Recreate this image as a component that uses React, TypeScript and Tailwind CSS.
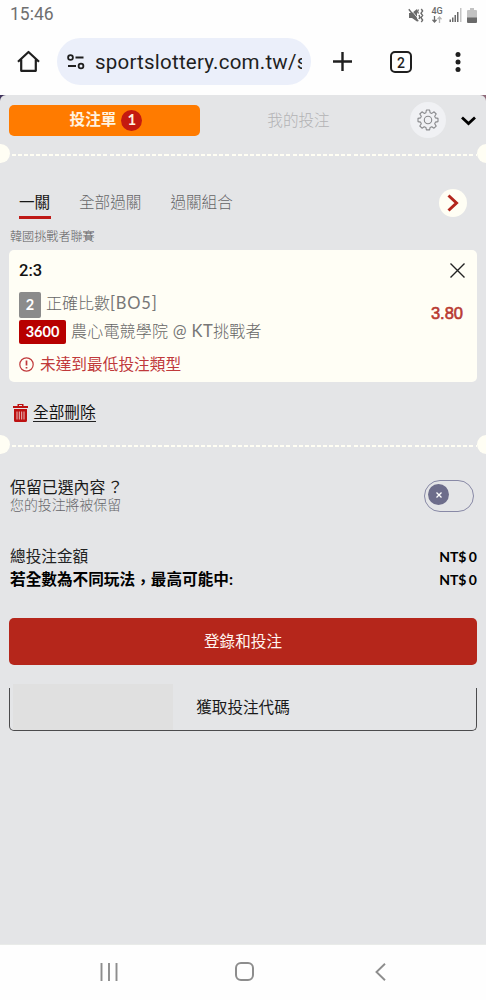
import type { ReactNode } from "react";

const cjk = "font-['Lato','Noto_Sans_CJK_TC',sans-serif]";

function StatusBar() {
  return (
    <div className="flex h-[30px] shrink-0 items-center justify-between pl-[10px] pr-[9px]">
      <span className="font-['Roboto',sans-serif] text-[17.500px] leading-none text-[#6f6f6f]">15:46</span>
      <div className="flex items-center text-[#6a6a6a]">
        {/* muted + vibrate */}
        <svg className="mr-[7px]" width="16" height="15" viewBox="0 0 16 15" fill="none" stroke="currentColor">
          <path d="M1 5h3l5-4v12.500l-5-3.500H1z" fill="currentColor" stroke="none" />
          <path d="M2 .5l8 10" stroke="#fff" strokeWidth=".8" />
          <path d="M.8 1.200l9.400 12" strokeWidth="1.400" />
          <path d="M10.500 1.500l-1 2 1 2M13.300 1l1.300 2-1.600 2.200 1.600 2.300-1.600 2.200 1.600 2.300-1.300 2M11 7l.8 2-.8 2" strokeWidth="1.400" />
        </svg>
        <div className="mr-[6px] flex w-[12px] flex-col items-center">
          <span className="font-['Roboto',sans-serif] text-[9px] font-medium leading-[9px]">4G</span>
          <svg width="10" height="7" viewBox="0 0 10 7" fill="none" stroke="currentColor" strokeWidth="1.300">
            <path d="M2.500 0v6M.5 3.800l2 2.200 2-2.200" />
            <path d="M7.500 7V1M5.500 3.200l2-2.200 2 2.200" stroke="#b5b5b5" />
          </svg>
        </div>
        <svg className="mr-[5px]" width="13" height="14" viewBox="0 0 13 14" fill="currentColor">
          <path d="M.5 11.500H2V14H.5zM3 9.500h1.500V14H3zM5.500 7H7v7H5.500zM8 4h1.500v10H8z" />
          <path d="M11 0h1.500v14H11z" fill="#c4c4c4" />
        </svg>
        <svg width="10" height="15" viewBox="0 0 10 15">
          <path d="M3 0h4v2h2a1 1 0 011 1v7H0V3a1 1 0 011-1h2z" fill="#c2c2c2" />
          <path d="M0 9.500h10V14a1 1 0 01-1 1H1a1 1 0 01-1-1z" fill="#6a6a6a" />
        </svg>
      </div>
    </div>
  );
}

function BrowserBar() {
  return (
    <div className="flex h-[65px] shrink-0 items-center pb-[2px] pl-[17px] text-[#1f1f1f]">
      <svg width="23" height="23" viewBox="0 0 23 23" fill="none" stroke="currentColor" strokeWidth="2.200">
        <path d="M1 11.800L11.500 2 22 11.800M4.200 9.500v11.300h14.600V9.500" strokeLinejoin="round" />
      </svg>
      <div className="ml-[17px] flex h-[47px] w-[254px] items-center rounded-full bg-[#ebeffa] pl-[10px] pr-[9px]">
        <svg className="shrink-0" width="18" height="16" viewBox="0 0 18 16" fill="none" stroke="currentColor" strokeWidth="1.800">
          <circle cx="3.500" cy="3.500" r="2.400" />
          <path d="M8.500 3.500h8M1 12h8" />
          <circle cx="14" cy="12" r="2.400" />
        </svg>
        <span className="ml-[10px] overflow-hidden whitespace-nowrap font-['Roboto',sans-serif] text-[20.500px] leading-7 tracking-[0.220px]">
          sportslottery.com.tw/s
        </span>
      </div>
      <svg className="ml-[22px]" width="19" height="19" viewBox="0 0 19 19" stroke="currentColor" strokeWidth="2.400">
        <path d="M9.500 0v19M0 9.500h19" />
      </svg>
      <div className="ml-[38px] flex h-[22px] w-[22px] items-center justify-center rounded-[5px] border-2 border-current pt-[2px] font-['Roboto',sans-serif] text-[14px] font-medium leading-none">
        2
      </div>
      <svg className="ml-[43px]" width="6" height="20" viewBox="0 0 6 20" fill="currentColor">
        <circle cx="3" cy="2.500" r="2.500" />
        <circle cx="3" cy="10" r="2.500" />
        <circle cx="3" cy="17.500" r="2.500" />
      </svg>
    </div>
  );
}

function TicketDivider() {
  return (
    <div className="flex h-[19px] shrink-0 items-center overflow-hidden">
      <div className="-ml-[9px] h-[19px] w-[19px] shrink-0 rounded-full bg-[#fffef4]" />
      <div className="ml-[2px] mt-[2px] h-[2px] flex-1 bg-[repeating-linear-gradient(90deg,#fffef4_0_4px,transparent_4px_6.100px)]" />
      <div className="-mr-[10px] h-[19px] w-[19px] shrink-0 rounded-full bg-[#fffef4]" />
    </div>
  );
}

function Tabs() {
  return (
    <div className="flex h-[38px] shrink-0 items-center pl-[9px] pr-[10px]">
      <div className="flex h-[31px] w-[191px] items-center justify-center rounded-[5px] bg-[#ff7b00] pl-[3px] text-[15.600px] font-bold text-[#fff3e0]">
        投注單
        <span className="ml-[5px] flex h-[21px] w-[21px] items-center justify-center rounded-full bg-[#c41a10] pb-px text-[15px]">
          1
        </span>
      </div>
      <div className="flex-1 pr-[13px] pt-px text-center text-[15.600px] font-light text-[#b3b3b5]">我的投注</div>
      <div className="flex h-[36px] w-[36px] items-center justify-center rounded-full bg-[#f0f1f4]">
        <svg width="22" height="22" viewBox="0 0 22 22" fill="none" stroke="#88898c" strokeWidth="1.100" strokeLinejoin="round">
          <path d="M9.400 1h3.200l.5 2.700 1.700.7L17.100 2.800l2.100 2.200-1.500 2.200.7 1.700 2.600.5v3.200l-2.600.5-.7 1.700 1.500 2.300-2.200 2.100-2.200-1.500-1.700.7-.5 2.500H9.400l-.5-2.500-1.700-.7L5 19.200 2.800 17l1.500-2.200-.7-1.700-2.600-.5V9.400l2.600-.5.7-1.700L2.800 5 5 2.800l2.200 1.600 1.700-.7z" />
          <circle cx="11" cy="11" r="3.700" />
        </svg>
      </div>
      <svg className="ml-[15px] mt-[2px]" width="15" height="10" viewBox="0 0 15 10" fill="none" stroke="#000" strokeWidth="2.800">
        <path d="M1 1.500l6.500 6 6.500-6" />
      </svg>
    </div>
  );
}

function BetTypes() {
  return (
    <div className="mt-[26px] flex h-[39px] items-start pl-[19px] pr-[19px] text-[15.600px] leading-[26px] text-[#666668]">
      <span className="h-[30px] w-[32px] border-b-[3px] border-[#bf1a17] text-[#161616]">一關</span>
      <span className="ml-[28px] font-light">全部過關</span>
      <span className="ml-[29px] font-light">過關組合</span>
      <span className="ml-auto flex h-7 w-7 items-center justify-center rounded-full bg-[#fffef4]">
        <svg width="12" height="18" viewBox="0 0 12 18" fill="none" stroke="#b3261c" strokeWidth="3">
          <path d="M1.500 1.500L9.500 9l-8 7.500" />
        </svg>
      </span>
    </div>
  );
}

function BetCard() {
  return (
    <div className="mx-[9px] h-[132px] rounded-[5px] bg-[#fffef5] pl-[10px] pr-[11px] pt-[8px]">
      <div className="flex h-6 items-center justify-between">
        <span className="pt-[2px] font-['Roboto',sans-serif] text-[16.500px] font-medium text-[#111]">2:3</span>
        <svg width="17" height="17" viewBox="0 0 17 17" stroke="#222" strokeWidth="1.400">
          <path d="M1.500 1.500l14 14M15.500 1.500l-14 14" />
        </svg>
      </div>
      <div className="mt-[10px] flex items-center justify-between">
        <div className="text-[16px] font-light text-[#666]">
          <div className="flex h-[26px] items-center">
            <span className="mr-[5px] flex h-[26px] w-[22px] items-center justify-center rounded-[2px] bg-[#8b8b8b] text-[14.500px] font-bold text-white">
              2
            </span>
            <span className="pb-[3px]">
              正確比數<span className="text-[16.500px] font-normal tracking-[0.800px] text-[#777]">[BO5]</span>
            </span>
          </div>
          <div className="mt-[2px] flex h-6 items-center">
            <span className="mr-[5px] flex h-6 w-[47px] items-center justify-center rounded-[2px] bg-[#b70000] text-[14.500px] font-bold text-white">
              3600
            </span>
            <span className="pb-[2px] tracking-[0.200px]">
              農心電競學院 <span className="text-[16.500px] font-normal tracking-[0.400px] text-[#777]">@ KT</span>挑戰者
            </span>
          </div>
        </div>
        <span className="mr-[3px] mt-[-9px] font-['Liberation_Sans',sans-serif] text-[16.500px] text-[#b83a31] [-webkit-text-stroke:0.600px_#b83a31]">
          3.80
        </span>
      </div>
      <div className="mt-[8px] flex h-6 items-center text-[15.700px] text-[#c0393b]">
        <svg className="mr-[6px]" width="15" height="15" viewBox="0 0 15 15" fill="none" stroke="currentColor" strokeWidth="1.200">
          <circle cx="7.500" cy="7.500" r="6.700" />
          <path d="M7.500 3.500v5M7.500 10v1.600" strokeWidth="1.700" />
        </svg>
        <span className="pt-px">未達到最低投注類型</span>
      </div>
    </div>
  );
}

function AmountRow({ label, bold = false }: { label: ReactNode; bold?: boolean }) {
  return (
    <div className="flex h-[23px] items-center justify-between text-[15.650px] text-black">
      <span className={bold ? "pl-px font-bold" : "pl-px font-normal text-[#222]"}>{label}</span>
      <span className="text-[14px] font-bold [word-spacing:-1px]">NT$ 0</span>
    </div>
  );
}

function SystemNav() {
  return (
    <div className="flex h-[55px] shrink-0 items-center bg-[#fefefe] pb-[2px] pl-[100px] text-[#8d8d8d]">
      <svg width="18" height="18" viewBox="0 0 18 18" stroke="currentColor" strokeWidth="1.900">
        <path d="M1.500 0v18M9 0v18M16.500 0v18" />
      </svg>
      <div className="ml-[117px] h-[19px] w-[19px] rounded-[6px] border-2 border-current" />
      <svg className="ml-[121px]" width="11" height="18" viewBox="0 0 11 18" fill="none" stroke="currentColor" strokeWidth="1.900">
        <path d="M10 .8L1.500 9l8.500 8.200" />
      </svg>
    </div>
  );
}

export default function App() {
  return (
    <div lang="zh-Hant" className={`flex h-[1000px] w-[486px] flex-col overflow-hidden bg-[#fefefe] ${cjk}`}>
      <StatusBar />
      <BrowserBar />
      <div className="min-h-0 flex-1 bg-[linear-gradient(90deg,#40335c_50%,#8d6878_50%)]">
        <main className="flex h-full flex-col rounded-t-[6px] border-b border-[#e9ebe9] bg-[#e4e5e7] pt-[6px]">
          <Tabs />
          <div className="mt-[5px]">
            <TicketDivider />
          </div>
          <BetTypes />
          <div className="h-[22px] pl-[10px] text-[12.100px] font-light leading-[18px] text-[#5c5c5e]">韓國挑戰者聯賽</div>
          <BetCard />

          <div className="mt-[18px] flex h-[26px] items-center pl-[13px] text-[15.650px] text-[#111]">
            <svg className="mr-[5px]" width="15" height="18" viewBox="0 0 15 18" fill="#bd1111">
              <path d="M4.500 0h6v2H15v2H0V2h4.500zM6 1v1h3V1zM1 5h13v11.500a1.500 1.500 0 01-1.500 1.500h-10A1.500 1.500 0 011 16.500z" fillRule="evenodd" />
              <path d="M4 7.500v8M6.300 7.500v8M8.700 7.500v8M11 7.500v8" stroke="#ecd5d5" strokeWidth=".9" />
            </svg>
            <span className="border-b border-[#222] leading-[17px]">全部刪除</span>
          </div>

          <div className="mt-[9px]">
            <TicketDivider />
          </div>

          <div className="mt-[22px] flex h-[40px] items-start justify-between pl-[10px] pr-[12px]">
            <div>
              <div className="text-[15.900px] leading-[22px] text-[#1a1a1a]">
                保留已選內容<span className="ml-[2px]">？</span>
              </div>
              <div className="text-[13.900px] font-light leading-[14px] text-[#66666a]">您的投注將被保留</div>
            </div>
            <div className="mt-[4px] flex h-[32px] w-[50px] rounded-full border border-[#8889a6] pl-[3px] pt-[3px]">
              <div className="flex h-[21px] w-[21px] items-center justify-center rounded-full bg-[#6d6d8b]">
                <svg width="6" height="6" viewBox="0 0 6 6" stroke="#fff" strokeWidth="1.300">
                  <path d="M.5.5l5 5M5.500.5l-5 5" />
                </svg>
              </div>
            </div>
          </div>

          <div className="mt-[29px] px-[9px]">
            <AmountRow label="總投注金額" />
            <AmountRow
              label={
                <>
                  若全數為不同玩法<span className="inline-block translate-y-[3px] leading-none">，</span>最高可能中:
                </>
              }
              bold
            />
          </div>

          <button className="mx-[9px] mt-[27px] h-[47px] shrink-0 rounded-[5px] bg-[#b5261b] text-[15.600px] text-[#fff5f0]">
            登錄和投注
          </button>
          <div className="relative mx-[9px] mt-[23px] flex h-[43px] shrink-0 items-center justify-center rounded-b-[5px] border border-t-0 border-[#4b4b4d] pb-[2px] text-[15.600px] text-[#1a1a1a]">
            <div className="absolute -top-[4px] left-[3px] h-[46px] w-[160px] bg-[#e0e0e0]" />
            獲取投注代碼
          </div>
        </main>
      </div>
      <SystemNav />
    </div>
  );
}
